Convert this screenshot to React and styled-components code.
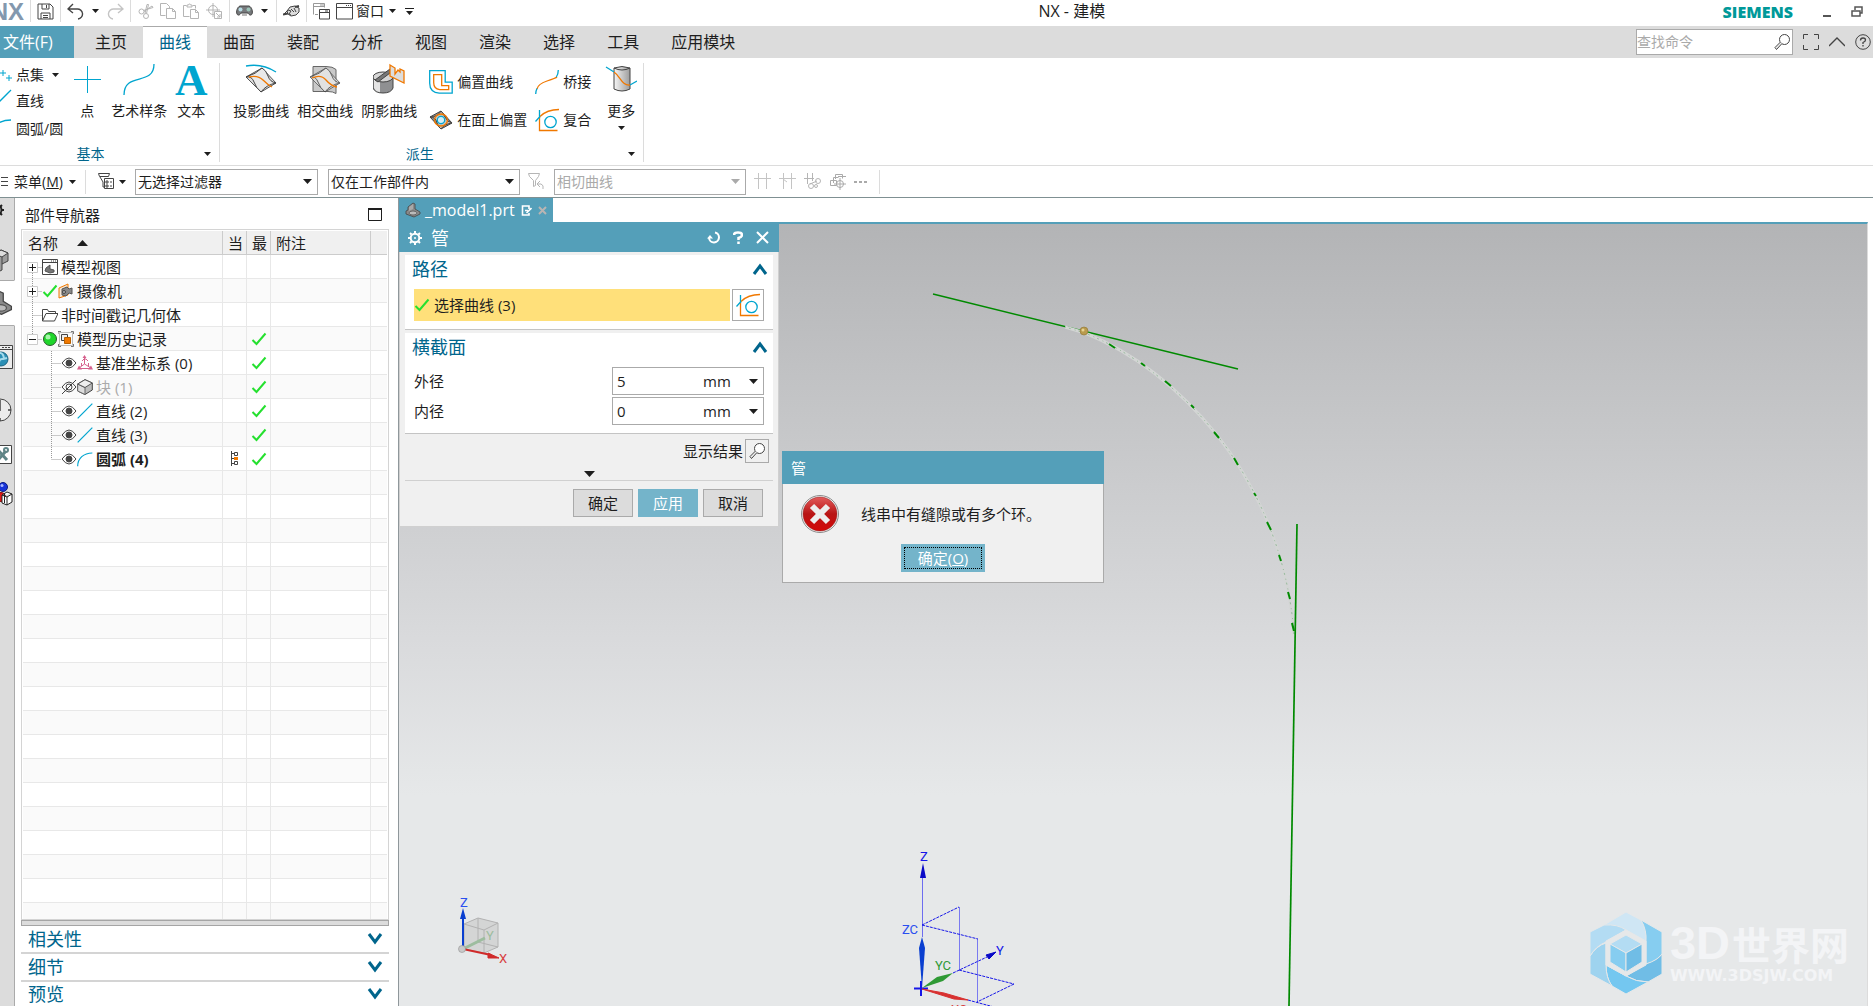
import React from 'react';
import styled, { createGlobalStyle, css } from 'styled-components';

const teal = '#549fb9';
const blue = '#00658c';
const cyan = '#00a5cf';
const orange = '#f07800';
const dark = '#444';

const GlobalStyle = createGlobalStyle`
  * {
    box-sizing: border-box;
  }
  body {
    margin: 0;
    overflow: hidden;
    background: #fff;
    color: #1e1e1e;
    font-family: 'Open Sans', 'Noto Sans CJK SC', sans-serif;
    font-size: 14px;
    line-height: 18px;
  }
  button, input, select {
    font: inherit;
    color: inherit;
  }
  svg {
    display: block;
    flex: none;
  }
`;

/* ---------- icons ---------- */

const Icon = ({ w = 16, h = w, vb, color = dark, children }) => (
  <svg width={w} height={h} viewBox={vb || `0 0 ${w} ${h}`} fill="none" stroke={color} aria-hidden="true">
    {children}
  </svg>
);

const Caret = ({ w = 7, color = '#1e1e1e' }) => (
  <svg width={w} height={(w + 1) / 2} viewBox="0 0 8 4" preserveAspectRatio="none" fill={color} aria-hidden="true">
    <path d="M0 0h8L4 4z" />
  </svg>
);

const SortArrow = () => (
  <svg width="11" height="6" viewBox="0 0 11 6" fill="#1e1e1e" aria-hidden="true">
    <path d="M0 6h11L5.500 0z" />
  </svg>
);

const Chevron = ({ up }) => (
  <Icon w={16} h={12} color={blue}>
    <path d={up ? 'M2 11L8 3L14 11' : 'M2 1L8 9L14 1'} strokeWidth="3" />
  </Icon>
);

const Check = () => (
  <Icon w={16} color="#25e02f">
    <path d="M1.500 9L5.500 13L14.500 2.500" strokeWidth="2" />
  </Icon>
);

const SaveIcon = () => (
  <Icon w={17}>
    <path d="M1 1h12l3 3v12H1zM5 1v5h7V1M9.500 2v3M4 16v-6h9v6M6 12.500h5M6 14.500h5" />
  </Icon>
);
const UndoIcon = ({ redo }) => (
  <Icon w={17} color={redo ? '#c4c4c4' : dark}>
    <g transform={redo ? 'translate(17 0) scale(-1 1)' : undefined} strokeWidth="1.400">
      <path d="M6 1L1 6l5 4M1 6h9a5 5 0 0 1 1 10" />
    </g>
  </Icon>
);
const CutIcon = () => (
  <Icon w={16} color="#b5b5b5">
    <circle cx="3.500" cy="8.500" r="2.500" />
    <circle cx="8" cy="13" r="2.500" />
    <path d="M5.500 7.500L15 4.500l-1-1.500L6 8.500M7 10.500L9 1.500h1.500L8.500 10.500" />
  </Icon>
);
const CopyIcon = () => (
  <Icon w={17} color="#b5b5b5">
    <path d="M5.500 12.500h-5v-12h6l3 3v2M6.500 5.500h6l3 3v7h-9zM12.500 5.500v3h3" />
  </Icon>
);
const PasteIcon = () => (
  <Icon w={17} color="#b5b5b5">
    <path d="M6.500 13.500h-6v-11h3M9.500 2.500h3v3M4 4V2h1.500a1 1 0 0 1 2 0H9v2zM7.500 6.500h5l3 3v6h-8zM12.500 6.500v3h3" />
  </Icon>
);
const TargetIcon = () => (
  <Icon w={17} color="#b5b5b5">
    <path d="M7 0v14M0 7h14" />
    <circle cx="7" cy="7" r="4.500" />
    <path d="M8.500 8.500h7v7h-7z" fill="#fff" />
    <path d="M10 10l4 4M14 11v3h-3" />
  </Icon>
);
const GamepadIcon = () => (
  <Icon w={17} h={12}>
    <path d="M4 1h9c3 1 4 6 3 8s-3 1-4-1H5c-1 2-3 3-4 1S1 2 4 1z" fill="#77797c" />
    <circle cx="4.500" cy="4.500" r="2" fill="#b7dce6" stroke="none" />
    <circle cx="12.500" cy="4.500" r="2" fill="#9cc4b8" stroke="none" />
    <path d="M6 9h5v2H6z" fill="#bbb" stroke="none" />
  </Icon>
);
const HandIcon = () => (
  <Icon w={17} h={13}>
    <path d="M4 6l3-4 5-1 4 2v4l-3 3-5 1-3-2z" fill="#ddd" />
    <path d="M1 9l4-4 3 1-2 3 2 1M8 4l3 3M11 3l2 4" />
    <path d="M0 9.500l5-1M12 2l4-1" strokeWidth="2" />
  </Icon>
);
const WindowsIcon = () => (
  <Icon w={17}>
    <path d="M.5 11.500v-11h11v4M.5 3.500h11M7 2h4M2 11.500h3" stroke="#999" />
    <path d="M6.500 6.500h10v9.500h-10zM6.500 9.500h10M12 8h3" />
  </Icon>
);
const WindowIcon = () => (
  <Icon w={17}>
    <path d="M.5.5h16v15.500H.5zM.5 4.500h16" />
    <path d="M10 2.500h6" strokeDasharray="1 1" />
  </Icon>
);

const PointSetIcon = () => (
  <Icon w={24} color={cyan}>
    <path d="M15 7v6M12 10h6M21 12v6M18 15h6M9 2v5M6 5h5" />
  </Icon>
);
const LineIcon = ({ w = 24 }) => (
  <Icon w={w} vb="0 0 24 24" color={cyan}>
    <path d="M1 23L23 1" strokeWidth={w > 20 ? 1.3 : 1.8} />
  </Icon>
);
const ArcIcon = ({ w = 24 }) => (
  <Icon w={w} vb="0 0 24 24" color={cyan}>
    <path d="M1 23C1 11 10 3 23 3" strokeWidth={w > 20 ? 1.4 : 1.8} />
  </Icon>
);
const PointIcon = () => (
  <Icon w={32} color={cyan}>
    <path d="M16.500 3v27M3 16.500h27" />
  </Icon>
);
const SplineIcon = () => (
  <Icon w={32} color={cyan}>
    <path d="M1 32C1 8 31 24 31 1" strokeWidth="1.300" />
  </Icon>
);

const Sheet = () => (
  <>
    <path d="M1 14L17 5l14 15-15 9z" fill="#dedede" stroke="#555" />
    <path d="M1 14q6-1 8 5t7 10q5-7 15-9-6-1-8-7t-6-8Q11 11 1 14z" fill="#e9e9e9" stroke="#444" />
  </>
);
const ProjectIcon = () => (
  <Icon w={32}>
    <Sheet />
    <path d="M1 3q16-3 30 6" stroke={cyan} strokeWidth="1.300" />
    <path d="M4 14q9-2 14 3t9 7" stroke={orange} strokeWidth="1.300" />
  </Icon>
);
const IntersectIcon = () => (
  <Icon w={32}>
    <path d="M4 3.500h13q7 0 10 3v24q-3-2-8-2H4z" fill="#c9c9c9" stroke="#666" />
    <g opacity=".8"><Sheet /></g>
    <path d="M3 15q9-4 14 2t11 7" stroke={orange} strokeWidth="1.300" />
  </Icon>
);
const ShadowIcon = () => (
  <Icon w={32}>
    <path d="M0 14v11q2 5 10 5t10-5V14z" fill="#8f9092" />
    <path d="M1 15v10q2 4 6 4V16z" fill="#e4e4e4" stroke="none" />
    <ellipse cx="10" cy="14" rx="10" ry="5" fill="#d6d6d6" />
    <path d="M2 17L17 6v4L5 19z" fill="#777" />
    <path d="M17 2l5 3v6l3-4 2 2v-3l4 2v12l-14-7z" fill="#ddd" stroke={orange} strokeWidth="1.300" />
  </Icon>
);
const OffsetIcon = () => (
  <Icon w={24}>
    <path d="M.7.7h15.500v11.500h7v11h-13q-9.500-1-9.500-10z" stroke={cyan} strokeWidth="1.300" />
    <path d="M4.700 4.700h8v11h7v4h-9q-6-1-6-7z" stroke={orange} strokeWidth="1.300" />
  </Icon>
);
const FaceOffsetIcon = () => (
  <Icon w={24}>
    <path d="M1 9L12 3l11 12-11 6z" fill="#8f8f8f" />
    <path d="M1 9q6 0 7 6 2 5 4 6 3-5 11-6-5-1-7-6-2-4-4-6-3 6-11 6z" fill="#c9c3bd" stroke={dark} />
    <ellipse cx="12" cy="12" rx="6.500" ry="6" stroke={orange} strokeWidth="1.300" />
    <circle cx="12" cy="12" r="3.700" fill="#d5eef5" stroke={cyan} strokeWidth="1.300" />
  </Icon>
);
const BridgeIcon = () => (
  <Icon w={24} color={orange}>
    <path d="M2 19q1-5 10-8t10-4" strokeWidth="1.300" />
    <path d="M.7 24q0-3 1.300-5.500M23.300 0q0 4-2 7" stroke={cyan} strokeWidth="1.300" />
  </Icon>
);
const CompositeIcon = () => (
  <Icon w={24} color={orange}>
    <path d="M4.500 9v13.500h18M5 8.500Q12 1.500 24 1.500" strokeWidth="1.300" />
    <path d="M4.500 2v8M.5 13.500L5 8.500" stroke={cyan} strokeWidth="1.300" />
    <circle cx="15.500" cy="14" r="5.700" stroke={cyan} strokeWidth="1.300" />
  </Icon>
);
const MoreIcon = () => (
  <Icon w={32}>
    <defs>
      <linearGradient id="cyl">
        <stop offset="0" stopColor="#f6f6f6" />
        <stop offset="1" stopColor="#9c9c9c" />
      </linearGradient>
    </defs>
    <path d="M9 5q8-3 16 0v21q-8 4-16 0z" fill="url(#cyl)" />
    <path d="M9 5q8 4 16 0" />
    <path d="M1 4l8 5M25 22l7-4" stroke={cyan} strokeWidth="1.300" />
    <path d="M9 9c6 4 8 14 16 13" stroke={orange} strokeWidth="1.300" />
  </Icon>
);

const FunnelIcon = () => (
  <Icon w={17}>
    <path d="M.5.500h11M.5.500l1 3h9l1-3M2 4l3 5v5h2" />
    <path d="M6.500 5.500h9v10h-9z" fill="#fff" />
    <path d="M8 8h2v2H8zM8 12h2v2H8zM12 9h2M12 13h2" />
  </Icon>
);
const FunnelBackIcon = () => (
  <Icon w={17} color="#b5b5b5">
    <path d="M.5.500h11l-1 3-3 4v5l-2 1V7.500l-4-4z" />
    <path d="M12 8l-3 3 3 3M9 11h4q3 1 2 5" />
  </Icon>
);
const FenceIcon = ({ mark }) => (
  <Icon w={17} color="#c4c4c4">
    <path d="M4.500 0v16M12.500 0v16M0 5.500h17" />
    {mark && <path d="M4 6l4 3" />}
  </Icon>
);
const ChainIcon = () => (
  <Icon w={17} color="#b5b5b5">
    <path d="M3.500 0v11M8.500 0v8M0 5.500h10M6 11l7-3" />
    <circle cx="14" cy="8" r="2.500" />
    <circle cx="7" cy="13" r="2.500" />
    <circle cx="12" cy="13" r="1.500" />
  </Icon>
);
const CrossIcon = () => (
  <Icon w={17} color="#aaa">
    <path d="M1.500 7.500h6v5h-6zM4.500 10V4.500h5M6.500 6V1.500h7v4M9 3.500h8" />
    <circle cx="11" cy="11" r="3.500" />
    <path d="M11 5v12M5 11h12" />
  </Icon>
);

const SearchIcon = ({ w = 16 }) => (
  <Icon w={w} vb="0 0 16 16">
    <circle cx="10.500" cy="5.500" r="5" fill="#fff" />
    <path d="M6.500 8L1 13.500l1.500 2L8 9.500" fill="#eee" />
  </Icon>
);

const PartIcon = ({ w = 16 }) => (
  <Icon w={w} vb="0 0 16 16">
    <path d="M3 5l5-4 2 1v5l5 3v2l-6 3-8-3v-3l2-1z" fill="#8a8a8a" stroke="#444" strokeWidth=".8" />
    <ellipse cx="8" cy="11" rx="4" ry="2" fill="#bbb" stroke="#555" strokeWidth=".8" />
    <path d="M4 5l4-3v5l-4 2z" fill="#a9a9a9" stroke="none" />
  </Icon>
);

const ModelViewIcon = () => (
  <Icon>
    <path d="M.5.500h15v15H.5z" fill="#fff" />
    <path d="M.5 3.500h15" />
    <path d="M9 2h6" strokeDasharray="1 1" />
    <path d="M4 9l4-3v4l4 1v2l-4 1-5-2z" fill="#777" stroke="#555" />
  </Icon>
);
const CameraIcon = () => (
  <Icon>
    <path d="M1 5l9-4v11L1 15z" stroke={orange} fill="#f3e5d6" />
    <path d="M4 6l5-2 2 2 3-1v6l-3-1-3 3-4-1z" fill="#888" stroke="#555" />
    <circle cx="6" cy="9" r="1.500" fill="#bbb" stroke="#444" />
  </Icon>
);
const FolderIcon = () => (
  <Icon>
    <path d="M.5 14V2.500h5l1 2h7V7M.5 14L4 6.500h12L12.500 14z" />
  </Icon>
);
const GreenBall = () => (
  <Icon>
    <circle cx="8" cy="8" r="6.500" fill="#1fd52b" stroke="#2b5a2d" />
    <circle cx="6" cy="6" r="2.500" fill="#a6f5a9" stroke="none" />
  </Icon>
);
const HistoryIcon = () => (
  <Icon color="#777">
    <path d="M1.500 1.500h13v13h-13z" stroke="#bbb" />
    <path d="M0 3V.5h3M13 .5h2.500V3M.5 13v2.500H3M13 15.500h2.500V13" />
    <path d="M3.500 3.500h6v6h-6z" stroke="#444" fill="#eee" />
    <path d="M6.500 6.500h6v6h-6z" fill={orange} stroke="#b86000" />
  </Icon>
);
const EyeIcon = ({ hidden }) => (
  <Icon>
    <path d="M1 8q7-10 14 0-7 10-14 0z" />
    <circle cx="8" cy="8" r="3" fill={hidden ? 'none' : dark} />
    {hidden && <path d="M1 15L15 1M6 10l4-4" />}
  </Icon>
);
const CsysIcon = () => (
  <Icon color="#d6618d">
    <path d="M7.500 1v8M7.500 9L2 13M7.500 9L14 13M2 13.500h12M5 6l2-2h2l2 2M4.500 8v3M11.500 8v3" />
    <path d="M7.500 0l2 3h-4zM0 14.500l2-4 3 4zM16 14.500l-2-4-3 4z" fill="#d6618d" stroke="none" />
  </Icon>
);
const BlockIcon = () => (
  <Icon>
    <path d="M.7 5L8 .700 15.300 4v7L8 15.500.7 12z" fill="#bdbdbd" />
    <path d="M.7 5L8 8.500V15.500L.7 12z" fill="#ddd" stroke="#666" />
    <path d="M.7 5L8 .700 15.300 4 8 8.500z" fill="#eee" stroke="#555" />
  </Icon>
);
const FlagIcon = () => (
  <Icon w={9} h={15}>
    <path d="M1.500 0v15M1.500 2.500h3M1.500 7.500h3M1.500 12.500h3M4.500 1.500h3v3h-3zM4.500 10.500h3v3h-3z" />
    <path d="M4 6h4v3H4z" fill={orange} stroke="none" />
  </Icon>
);

/* tree guides: expander box plus the dotted connectors round it */
const Guide = ({ kind, first, last }) => {
  const child = kind === 'child';
  const x = child ? 28.5 : 9.5;
  return (
    <svg width={child ? 38 : 19} height="23" fill="none" stroke="#999" aria-hidden="true">
      {!first && <path d={`M${x} 0V12`} strokeDasharray="1 1" />}
      {!last && <path d={`M${x} 12V23`} strokeDasharray="1 1" />}
      <path d={`M${x} 12.500h9`} strokeDasharray="1 1" />
      {(kind === 'plus' || kind === 'minus') && (
        <>
          <path d="M4.500 7.500h10v10h-10z" fill="#fff" stroke="#ccc" />
          <path d={kind === 'plus' ? 'M6 12.500h7M9.500 9v7' : 'M6 12.500h7'} stroke="#1e1e1e" />
        </>
      )}
    </svg>
  );
};

/* ---------- title bar ---------- */

const Page = styled.div`
  display: flex;
  flex-direction: column;
  height: 100vh;
`;

const PlainButton = styled.button`
  display: flex;
  align-items: center;
  justify-content: center;
  padding: 0;
  border: 0;
  background: none;
`;

const TitleBar = styled.header`
  display: flex;
  height: 26px;
  flex: none;
`;

const Brand = styled.div`
  display: flex;
  justify-content: flex-end;
  width: 30px;
  padding-right: 6px;
  overflow: hidden;
  color: #8398ae;
  font: bold 24px/24px 'Liberation Sans', sans-serif;
`;

const QuickGroup = styled.div`
  display: flex;
  align-items: center;
  height: 22px;
  padding: 0 3px;
  border-left: 1px solid #dcdcdc;
`;

const QuickButton = styled(PlainButton)`
  width: ${({ $narrow }) => ($narrow ? '17px' : '23px')};
  height: 22px;
`;

const Title = styled.h1`
  flex: 1;
  margin: 0;
  text-align: center;
  font-size: 16px;
  font-weight: normal;
  line-height: 22px;
`;

const Siemens = styled.span`
  color: #009999;
  font-size: 16px;
  font-weight: 800;
  line-height: 24px;
`;

const WindowControls = styled.div`
  display: flex;
  gap: 20px;
  height: 22px;
  padding: 0 10px 0 30px;
`;

/* ---------- ribbon ---------- */

const TabBar = styled.nav`
  display: flex;
  align-items: stretch;
  height: 32px;
  flex: none;
  background: #dcdcdc;
`;

const Tab = styled.a`
  padding: 0 16px;
  font-size: 16px;
  line-height: 32px;
  text-decoration: none;
  color: #1e1e1e;
  ${({ $file }) =>
    $file &&
    css`
      width: 74px;
      margin-right: 5px;
      padding: 0 0 0 3px;
      background: ${teal};
      color: #fff;
    `}
  ${({ $active }) =>
    $active &&
    css`
      background: #fff;
      color: ${blue};
      box-shadow: inset 0 1px #aaa;
    `}
`;

const TabTools = styled.div`
  display: flex;
  align-items: center;
  gap: 10px;
  margin-left: auto;
  padding-right: 2px;
`;

const SearchBox = styled.label`
  display: flex;
  align-items: center;
  width: 157px;
  height: 26px;
  padding-right: 2px;
  border: 1px solid #aaa;
  background: #fff;

  input {
    flex: 1;
    min-width: 0;
    padding: 0;
    border: 0;
    outline: 0;
    background: none;
  }
  input::placeholder {
    color: #aaa;
  }
`;

const Ribbon = styled.div`
  display: flex;
  height: 108px;
  flex: none;
  padding: 5px 0 3px;
  border-bottom: 1px solid #dcdcdc;
  overflow: hidden;
`;

const RibbonGroup = styled.section`
  display: flex;
  flex-direction: column;
  justify-content: space-between;
  border-right: 1px solid #dcdcdc;
  /* the first group is scrolled partly out of the window */
  margin-left: ${({ $cut }) => ($cut ? '-14px' : '0')};
`;

const Tools = styled.div`
  display: flex;
  gap: ${({ $gap }) => $gap || 0}px;
  padding: 0 ${({ $end }) => $end}px 0 ${({ $start }) => $start}px;
`;

const GroupFooter = styled.footer`
  display: flex;
  align-items: center;
  height: 16px;
  color: ${blue};

  span {
    flex: 1;
    text-align: center;
  }
  button {
    width: 24px;
  }
`;

const BigTool = styled(PlainButton)`
  flex-direction: column;
  justify-content: flex-start;
  width: ${({ $w }) => $w}px;
  white-space: nowrap;

  span {
    margin: 7px 0 6px;
  }
`;

const Letter = styled.b`
  height: 32px;
  color: ${cyan};
  font: bold 45px/34px 'Liberation Serif', serif;
`;

const ToolList = styled.div`
  display: flex;
  flex-direction: column;
`;

const SmallTool = styled(PlainButton)`
  justify-content: flex-start;
  gap: 4px;
  height: ${({ $h }) => $h}px;
  white-space: nowrap;

  svg:last-child:not(:first-child) {
    margin-left: 4px;
  }
`;

/* ---------- selection bar ---------- */

const SelectionBar = styled.div`
  display: flex;
  align-items: center;
  height: 32px;
  flex: none;
  border-bottom: 1px solid #7f9092;
`;

const MenuButton = styled(PlainButton)`
  gap: 6px;
  width: 85px;
  padding-right: 8px;
`;

const Rule = styled.div`
  width: 1px;
  height: 24px;
  background: #dcdcdc;
`;

const FilterButton = styled(PlainButton)`
  gap: 4px;
  width: 49px;
  padding-left: 2px;
`;

const Dropdown = styled.div`
  display: grid;
  align-items: center;
  width: ${({ $w }) => $w}px;
  height: 26px;
  border: 1px solid #aaa;
  color: ${({ $off }) => ($off ? '#aaa' : '#1e1e1e')};
  margin-right: ${({ $gap }) => $gap || 0}px;

  select {
    grid-area: 1 / 1;
    height: 24px;
    padding: 0 2px;
    border: 0;
    border-radius: 0;
    outline: 0;
    appearance: none;
    background: none;
    opacity: 1;
  }
  svg {
    grid-area: 1 / 1;
    justify-self: end;
    margin-right: 5px;
    pointer-events: none;
  }
`;

const SnapTools = styled.div`
  display: flex;
  align-items: center;
  gap: 8px;
  padding: 0 12px 0 8px;
`;

const SnapButton = styled(PlainButton)`
  height: 24px;
  margin: ${({ $m }) => $m || '0'};
`;

const Dots = styled.span`
  width: 13px;
  height: 2px;
  background: repeating-linear-gradient(90deg, #aaa 0 3px, transparent 3px 5px);
`;

/* ---------- resource strip + navigator ---------- */

const Main = styled.main`
  display: flex;
  flex: 1;
  min-height: 0;
`;

const Strip = styled.nav`
  display: flex;
  flex-direction: column;
  width: 15px;
  background: #dcdcdc;
`;

const StripItem = styled(PlainButton)`
  justify-content: flex-end;
  width: 15px;
  height: ${({ $h }) => $h}px;
  padding-top: ${({ $top }) => $top || 0}px;
  padding-right: ${({ $right }) => $right || 1}px;
  overflow: hidden;
  border-right: 1px solid #aaa;
  ${({ $active }) =>
    $active &&
    css`
      background: #fff;
      border-right-color: #fff;
      border-top: 1px solid #aaa;
      border-bottom: 1px solid #aaa;
    `}
`;

const StripFill = styled.div`
  flex: 1;
  border-right: 1px solid #aaa;
`;

const Navigator = styled.aside`
  display: flex;
  flex-direction: column;
  width: 384px;
  padding: 0 9px 0 6px;
  border-right: 1px solid #8f979b;
`;

const NavHead = styled.div`
  display: flex;
  align-items: center;
  justify-content: space-between;
  height: 31px;
  padding: 2px 7px 0 4px;
  font-size: 15px;
`;

const TreeBox = styled.div`
  flex: 1;
  min-height: 0;
  padding: 1px;
  overflow: hidden;
  border: 1px solid #d4d4d4;
`;

const Tree = styled.table`
  width: 100%;
  table-layout: fixed;
  border-collapse: separate;
  border-spacing: 0;
  font-size: 15px;

  th, td {
    height: 24px;
    padding: 0;
    border-right: 1px solid #e8e8e8;
    border-bottom: 1px solid #e8e8e8;
    line-height: 22px;
    white-space: nowrap;
  }
  th {
    padding-left: 5px;
    border-color: #ccc;
    background: #f0f0f0;
    font-weight: normal;
    text-align: left;
  }
  th:last-child, td:last-child {
    border-right: 0;
  }
  tbody tr:nth-child(even) {
    background: #fafafa;
  }
`;

const Col = styled.col`
  width: ${({ $w }) => ($w ? `${$w}px` : 'auto')};
`;

const Node = styled.div`
  display: flex;
  align-items: center;
  height: 23px;
  color: ${({ $dim }) => ($dim ? '#aaa' : 'inherit')};
  font-weight: ${({ $bold }) => ($bold ? 'bold' : 'normal')};

  span {
    padding-left: 3px;
  }
`;

const SortHead = styled.span`
  display: flex;
  align-items: center;
  gap: 19px;
`;

const Mark = styled.div`
  display: flex;
  justify-content: center;
`;

const Splitter = styled.div`
  height: 6px;
  flex: none;
  border: 1px solid #a5a5a5;
  background: #dcdcdc;
`;

const Fold = styled(PlainButton)`
  justify-content: space-between;
  height: 28px;
  flex: none;
  padding: 0 6px 0 7px;
  border-bottom: 2px solid #d4d4d4;
  color: ${blue};
  font-size: 18px;
  line-height: 24px;

  &:last-child {
    height: 24px;
    border-bottom: 0;
  }
`;

/* ---------- graphics window ---------- */

const Workspace = styled.section`
  display: flex;
  flex: 1;
  flex-direction: column;
  min-width: 0;
  padding-right: 5px;
`;

const FileTab = styled.div`
  display: flex;
  align-items: center;
  align-self: flex-start;
  height: 24px;
  padding: 0 6px;
  background: ${teal};
  color: #fff;
  font-size: 16px;

  span {
    margin: 0 6px 0 4px;
  }
  svg + svg {
    margin-left: 6px;
  }
`;

const Viewport = styled.div`
  position: relative;
  flex: 1;
  overflow: hidden;
  border-top: 2px solid ${teal};
  border-right: 1px solid #dcdcdc;
  background: linear-gradient(#b3b4b6, #d9dadc 53%, #e6e8e9 73%);
`;

const Scene = styled.svg`
  position: absolute;
  top: 0;
  left: 0;
  font-family: Roboto, sans-serif;
  font-size: 13px;
`;

const Watermark = styled.div`
  position: absolute;
  right: 18px;
  bottom: 12px;
  display: flex;
  align-items: center;
  gap: 8px;
  color: #f3f4f6;
  font-weight: bold;
`;

const MarkName = styled.div`
  display: flex;
  align-items: center;
  gap: 2px;
  font: bold 39px/46px 'Noto Sans CJK SC', sans-serif;

  span {
    font: bold 47px/46px 'Liberation Sans', sans-serif;
  }
`;

const MarkUrl = styled.div`
  font: bold 16px/20px 'DejaVu Sans', sans-serif;
`;

const ToolDialog = styled.form`
  position: absolute;
  top: 0;
  left: 0;
  width: 380px;
  border: solid #d0d0d0;
  border-width: 0 1px 1px;
  background: #f0f0f0;
  font-size: 15px;
`;

const DialogHead = styled.header`
  display: flex;
  align-items: center;
  height: 28px;
  margin: 0 -1px;
  padding: 0 10px 1px 9px;
  background: ${teal};
  color: #fff;

  h2 {
    flex: 1;
    margin: 0 0 0 9px;
    font-size: 18px;
    font-weight: normal;
  }
  button + button {
    margin-left: 13px;
  }
`;

const Panel = styled.fieldset`
  margin: 3px 5px 0;
  padding: 0 9px 8px;
  border: 0;
  border-bottom: 1px solid #c4c4c4;
  background: #fff;
`;

const PanelHead = styled.div`
  display: flex;
  align-items: center;
  justify-content: space-between;
  height: 28px;
  margin: 0 -4px 6px -2px;
  color: ${blue};
  font-size: 18px;
`;

const PickRow = styled.div`
  display: flex;
  gap: 2px;
`;

const Picked = styled.div`
  display: flex;
  align-items: center;
  gap: 4px;
  flex: 1;
  height: 32px;
  background: #ffe07a;
`;

const SquareButton = styled(PlainButton)`
  width: ${({ $s }) => $s}px;
  height: ${({ $s }) => $s}px;
  border: 1px solid #aaa;
`;

const FieldRow = styled.div`
  display: flex;
  align-items: center;
  justify-content: space-between;

  & + & {
    margin-top: 2px;
  }
`;

const Field = styled.div`
  display: grid;
  grid-template-columns: 1fr 64px;
  align-items: center;
  width: 152px;
  height: 28px;
  border: 1px solid #aaa;

  input, select {
    grid-row: 1;
    width: 100%;
    min-width: 0;
    height: 26px;
    padding: 0 4px;
    border: 0;
    border-radius: 0;
    outline: 0;
    background: none;
    appearance: none;
  }
  select {
    grid-column: 2;
  }
  svg {
    grid-area: 1 / 2;
    justify-self: end;
    margin-right: 5px;
    pointer-events: none;
  }
`;

const ResultRow = styled.div`
  display: flex;
  align-items: center;
  justify-content: flex-end;
  gap: 2px;
  padding: 5px 9px 0;
`;

const MoreBar = styled(PlainButton)`
  width: 368px;
  height: 18px;
  margin: 0 5px;
  padding-top: 4px;
  border-bottom: 1px solid #d0d0d0;
`;

const Actions = styled.div`
  display: flex;
  justify-content: ${({ $center }) => ($center ? 'center' : 'flex-end')};
  gap: 5px;
  padding: ${({ $center }) => ($center ? '0 0 10px' : '8px 15px 9px')};
`;

const ActionButton = styled.button`
  width: ${({ $wide }) => ($wide ? '84px' : '60px')};
  height: 28px;
  padding: 0;
  border: 1px solid ${({ $primary }) => ($primary ? '#74b4ca' : '#aaa')};
  background: ${({ $primary }) => ($primary ? '#74b4ca' : '#dcdcdc')};
  color: ${({ $primary }) => ($primary ? '#fff' : '#1e1e1e')};
  font-size: 15px;
  ${({ $wide }) =>
    $wide &&
    css`
      outline: 1px dotted #000;
      outline-offset: -4px;
    `}
`;

const Alert = styled.div`
  position: absolute;
  top: 227px;
  left: 383px;
  width: 322px;
  border: solid #aaa;
  border-width: 0 1px 1px;
  background: #f0f0f0;
  font-size: 15px;
`;

const AlertHead = styled.h2`
  height: 33px;
  margin: 0 -1px;
  padding-left: 9px;
  background: ${teal};
  color: #fff;
  font-size: 15px;
  font-weight: normal;
  line-height: 34px;
`;

const AlertBody = styled.div`
  display: flex;
  align-items: center;
  gap: 21px;
  height: 60px;
  padding-left: 17px;
`;

/* ---------- data ---------- */

const tabs = ['主页', '曲线', '曲面', '装配', '分析', '视图', '渲染', '选择', '工具', '应用模块'];

const rows = [
  { name: '模型视图', kind: 'plus', first: true, icons: [<ModelViewIcon />] },
  { name: '摄像机', kind: 'plus', icons: [<Check />, <CameraIcon />] },
  { name: '非时间戳记几何体', kind: 'leaf', icons: [<FolderIcon />] },
  { name: '模型历史记录', kind: 'minus', last: true, icons: [<GreenBall />, <HistoryIcon />], ok: true },
  { name: '基准坐标系 (0)', kind: 'child', icons: [<EyeIcon />, <CsysIcon />], ok: true },
  { name: '块 (1)', kind: 'child', icons: [<EyeIcon hidden />, <BlockIcon />], ok: true, dim: true },
  { name: '直线 (2)', kind: 'child', icons: [<EyeIcon />, <LineIcon w={16} />], ok: true },
  { name: '直线 (3)', kind: 'child', icons: [<EyeIcon />, <LineIcon w={16} />], ok: true },
  { name: '圆弧 (4)', kind: 'child', last: true, icons: [<EyeIcon />, <ArcIcon w={16} />], ok: true, bold: true, current: true },
];
const blankRows = Array.from({ length: 30 });

const arc = 'M666 103L686 109C738 130 783 168 818 211C858 262 889 330 895 410';
const dashes = [
  'M710 120L716 124', 'M742 139L746 142', 'M766 157L772 162', 'M792 181L795 184',
  'M815 208L820 214', 'M835 234L839 241', 'M855 269L857 272', 'M868 298L872 306',
  'M880 331L882 337', 'M889 368L891 375', 'M893 399L895 407',
];

/* ---------- parts ---------- */

const QuickBar = () => (
  <TitleBar>
    <Brand>NX</Brand>
    <QuickGroup>
      <QuickButton aria-label="保存"><SaveIcon /></QuickButton>
    </QuickGroup>
    <QuickGroup>
      <QuickButton aria-label="撤消"><UndoIcon /></QuickButton>
      <QuickButton $narrow aria-label="撤消列表"><Caret /></QuickButton>
      <QuickButton aria-label="重做"><UndoIcon redo /></QuickButton>
    </QuickGroup>
    <QuickGroup>
      <QuickButton aria-label="剪切"><CutIcon /></QuickButton>
      <QuickButton aria-label="复制"><CopyIcon /></QuickButton>
      <QuickButton aria-label="粘贴"><PasteIcon /></QuickButton>
      <QuickButton aria-label="移动"><TargetIcon /></QuickButton>
    </QuickGroup>
    <QuickGroup>
      <QuickButton aria-label="重复命令"><GamepadIcon /></QuickButton>
      <QuickButton $narrow aria-label="命令列表"><Caret /></QuickButton>
    </QuickGroup>
    <QuickGroup>
      <QuickButton aria-label="触控"><HandIcon /></QuickButton>
    </QuickGroup>
    <QuickGroup>
      <QuickButton aria-label="切换窗口"><WindowsIcon /></QuickButton>
      <QuickButton aria-label="窗口"><WindowIcon /></QuickButton>
      <span>窗口</span>
      <QuickButton $narrow aria-label="窗口列表"><Caret /></QuickButton>
      <QuickButton $narrow aria-label="自定义">
        <Icon w={9} h={7}><path d="M0 .5h9" stroke="#1e1e1e" /><path d="M1 3h7L4.500 7z" fill="#1e1e1e" stroke="none" /></Icon>
      </QuickButton>
    </QuickGroup>
    <Title>NX - 建模</Title>
    <Siemens>SIEMENS</Siemens>
    <WindowControls>
      <PlainButton aria-label="最小化">
        <Icon w={8} h={11}><path d="M0 10h8" stroke="#555" strokeWidth="2" /></Icon>
      </PlainButton>
      <PlainButton aria-label="还原">
        <Icon w={12} h={11} color="#555"><path d="M4 4V1h7v6H9M1 5h8v5H1z" strokeWidth="1.500" /></Icon>
      </PlainButton>
    </WindowControls>
  </TitleBar>
);

const Tabs = () => (
  <TabBar>
    <Tab $file href="#file">文件(F)</Tab>
    {tabs.map((name) => (
      <Tab key={name} href={`#${name}`} $active={name === '曲线'}>{name}</Tab>
    ))}
    <TabTools>
      <SearchBox>
        <input type="text" placeholder="查找命令" aria-label="查找命令" />
        <SearchIcon />
      </SearchBox>
      <PlainButton aria-label="全屏">
        <Icon><path d="M.5 5V.5H5M11 .5h4.500V5M.5 11v4.500H5M11 15.500h4.500V11" /></Icon>
      </PlainButton>
      <PlainButton aria-label="折叠">
        <Icon><path d="M0 12L8 4l8 8" strokeWidth="1.300" /></Icon>
      </PlainButton>
      <PlainButton aria-label="帮助">
        <Icon>
          <circle cx="8" cy="8" r="7.300" />
          <path d="M5.500 6.500Q5.500 4 8 4t2.500 2Q10.500 7.500 8 8.500V10M8 11v1.500" strokeWidth="1.300" />
        </Icon>
      </PlainButton>
    </TabTools>
  </TabBar>
);

const CurveRibbon = () => (
  <Ribbon>
    <RibbonGroup $cut>
      <Tools $start={2} $end={4}>
        <ToolList>
          <SmallTool $h={24}><PointSetIcon />点集 <Caret /></SmallTool>
          <SmallTool $h={28}><LineIcon />直线</SmallTool>
          <SmallTool $h={28}><ArcIcon />圆弧/圆</SmallTool>
        </ToolList>
        <BigTool $w={48}><PointIcon /><span>点</span></BigTool>
        <BigTool $w={56}><SplineIcon /><span>艺术样条</span></BigTool>
        <BigTool $w={48}><Letter>A</Letter><span>文本</span></BigTool>
      </Tools>
      <GroupFooter>
        <span>基本</span>
        <PlainButton aria-label="基本选项"><Caret /></PlainButton>
      </GroupFooter>
    </RibbonGroup>
    <RibbonGroup>
      <Tools $gap={8} $start={9} $end={0}>
        <Tools $start={0} $end={0}>
          <BigTool $w={64}><ProjectIcon /><span>投影曲线</span></BigTool>
          <BigTool $w={64}><IntersectIcon /><span>相交曲线</span></BigTool>
          <BigTool $w={64}><ShadowIcon /><span>阴影曲线</span></BigTool>
        </Tools>
        <ToolList>
          <SmallTool $h={38}><OffsetIcon />偏置曲线</SmallTool>
          <SmallTool $h={38}><FaceOffsetIcon />在面上偏置</SmallTool>
        </ToolList>
        <ToolList>
          <SmallTool $h={38}><BridgeIcon />桥接</SmallTool>
          <SmallTool $h={38}><CompositeIcon />复合</SmallTool>
        </ToolList>
        <BigTool $w={44}><MoreIcon /><span>更多</span><Caret /></BigTool>
      </Tools>
      <GroupFooter>
        <span>派生</span>
        <PlainButton aria-label="派生选项"><Caret /></PlainButton>
      </GroupFooter>
    </RibbonGroup>
  </Ribbon>
);

const Selection = () => (
  <SelectionBar>
    <MenuButton>
      <Icon w={7} h={10}><path d="M0 .5h7M0 4.500h7M0 8.500h7" /></Icon>
      <span>菜单(<u>M</u>)</span>
      <Caret />
    </MenuButton>
    <Rule />
    <FilterButton aria-label="过滤器"><FunnelIcon /><Caret /></FilterButton>
    <Dropdown $w={183} $gap={10}>
      <select aria-label="类型过滤器"><option>无选择过滤器</option></select>
      <Caret w={9} />
    </Dropdown>
    <Dropdown $w={192}>
      <select aria-label="选择范围"><option>仅在工作部件内</option></select>
      <Caret w={9} />
    </Dropdown>
    <SnapButton $m="0 9px 0 8px" aria-label="重置过滤器"><FunnelBackIcon /></SnapButton>
    <Dropdown $w={192} $off>
      <select aria-label="曲线规则" disabled><option>相切曲线</option></select>
      <Caret w={9} color="#aaa" />
    </Dropdown>
    <SnapTools>
      <SnapButton aria-label="在相交处停止"><FenceIcon /></SnapButton>
      <SnapButton aria-label="跟随圆角"><FenceIcon mark /></SnapButton>
      <SnapButton aria-label="特征内成链"><ChainIcon /></SnapButton>
      <SnapButton aria-label="路径选择"><CrossIcon /></SnapButton>
      <SnapButton aria-label="更多"><Dots /></SnapButton>
    </SnapTools>
    <Rule />
  </SelectionBar>
);

const ResourceStrip = () => (
  <Strip>
    <StripItem $h={24} $right={9} aria-label="设置">
      <Icon w={16} color="#222">
        <circle cx="8" cy="8" r="4.500" strokeWidth="2" />
        <path d="M8 1v2M8 13v2M1 8h2M13 8h2M3 3l1.500 1.500M13 3l-1.500 1.500M3 13l1.500-1.500M13 13l-1.500-1.500" strokeWidth="2" />
      </Icon>
    </StripItem>
    <StripItem $h={58} $top={20} $right={5} aria-label="装配导航器">
      <Icon w={24}>
        <path d="M8 6l8-5 7 3v8l-6 3v6l-6 3-8-4z" fill="#9c9c9c" />
        <path d="M16 1l7 3-6 4-7-3zM17 8v7" fill="#ddd" />
      </Icon>
    </StripItem>
    <StripItem $h={46} $active aria-label="部件导航器"><PartIcon w={26} /></StripItem>
    <StripItem $h={62} aria-label="浏览器">
      <Icon w={24}>
        <path d="M.5.500h23v23H.5z" fill="#ececec" />
        <path d="M.5 4.500h23" />
        <path d="M13 2.500h9" strokeDasharray="2 1" />
        <circle cx="12" cy="14" r="7" fill="#2b8fb5" stroke="#1c6684" />
        <path d="M8 10q4-4 6 0t-1 4-3 4M14 14l4-1" stroke="#a5dbec" strokeWidth="2" />
      </Icon>
    </StripItem>
    <StripItem $h={44} $right={2} aria-label="历史记录">
      <Icon w={24}>
        <circle cx="12" cy="12" r="11" fill="#ececec" />
        <path d="M12 4v9M12 2v2M20 12h3M12 20v3" strokeWidth="1.500" />
      </Icon>
    </StripItem>
    <StripItem $h={44} $right={2} aria-label="加工向导">
      <Icon w={22} h={19}>
        <path d="M.5.500h21v18H.5z" fill="#fff" />
        <path d="M7 16l9-10M8 5l9 10" stroke="#5f8587" strokeWidth="3" />
        <circle cx="16" cy="5" r="2" stroke="#5f8587" strokeWidth="2" />
      </Icon>
    </StripItem>
    <StripItem $h={36} aria-label="角色">
      <Icon w={24}>
        <circle cx="14" cy="5" r="4.500" fill="#1734d8" stroke="#0b1a80" />
        <circle cx="13" cy="3.500" r="1.500" fill="#a9b7ff" stroke="none" />
        <circle cx="12" cy="15" r="4.500" fill="#e01818" stroke="#8a0d0d" />
        <path d="M13 13l5-3 5 2v8l-5 3-5-2zM13 13l5 2 5-3M18 15v8M15.500 12v9" fill="#fff" stroke="#222" />
      </Icon>
    </StripItem>
    <StripFill />
  </Strip>
);

const PartNavigator = () => (
  <Navigator>
    <NavHead>
      部件导航器
      <PlainButton aria-label="最大化">
        <Icon w={14} h={13} color="#1e1e1e">
          <path d="M.5 0v12.500h13V0" />
          <path d="M0 1h14" strokeWidth="2" />
        </Icon>
      </PlainButton>
    </NavHead>
    <TreeBox>
      <Tree>
        <colgroup>
          <Col $w={200} /><Col $w={24} /><Col $w={24} /><Col $w={100} /><Col />
        </colgroup>
        <thead>
          <tr>
            <th><SortHead>名称 <SortArrow /></SortHead></th>
            <th>当</th>
            <th>最</th>
            <th>附注</th>
            <th aria-label="其他" />
          </tr>
        </thead>
        <tbody>
          {rows.map((row) => (
            <tr key={row.name}>
              <td>
                <Node $dim={row.dim} $bold={row.bold}>
                  <Guide kind={row.kind} first={row.first} last={row.last} />
                  {row.icons.map((icon, i) => <React.Fragment key={i}>{icon}</React.Fragment>)}
                  <span>{row.name}</span>
                </Node>
              </td>
              <td><Mark>{row.current && <FlagIcon />}</Mark></td>
              <td><Mark>{row.ok && <Check />}</Mark></td>
              <td />
              <td />
            </tr>
          ))}
          {blankRows.map((_, i) => (
            <tr key={i}><td /><td /><td /><td /><td /></tr>
          ))}
        </tbody>
      </Tree>
    </TreeBox>
    <Splitter />
    <Fold>相关性<Chevron /></Fold>
    <Fold>细节<Chevron /></Fold>
    <Fold>预览<Chevron /></Fold>
  </Navigator>
);

const Model = () => (
  <Scene width="1468" height="782" viewBox="0 0 1468 782" fill="none">
    <path d="M534 70L839 145" stroke="#008a00" strokeWidth="1.500" />
    <path d={arc} stroke="#d3d5d4" strokeWidth="3" />
    <path d={arc} stroke="#7fae86" strokeWidth="1" strokeDasharray="1 3 2 4" opacity=".7" />
    {dashes.map((d) => <path key={d} d={d} stroke="#008a00" strokeWidth="2" />)}
    <path d="M898 300L890 782" stroke="#008a00" strokeWidth="1.700" />
    <circle cx="685" cy="107" r="4" fill="#b99b4e" stroke="#8d7433" strokeWidth=".6" />
    <circle cx="684" cy="106" r="1.500" fill="#e6d391" />

    {/* view triad */}
    <path d="M65 700L79 694L99 699V723L85 729L65 725z" fill="#cfcfcf" opacity=".8" />
    <path d="M65 700L79 694L99 699L85 706zM85 706V729L99 723V699M65 700V725L85 729M79 694V718L99 723M79 718L65 725" stroke="#b2b2b2" />
    <path d="M64 725L86 714" stroke="#9dbd9f" strokeWidth="3" />
    <text x="87" y="716" fill="#9dbd9f">Y</text>
    <path d="M64 725V692" stroke="#0a3fd0" strokeWidth="2" />
    <path d="M64 684l3 11h-6z" fill="#0a3fd0" />
    <path d="M64 725L92 731" stroke="#d02a2a" strokeWidth="2" />
    <path d="M100 734l-11-5v5z" fill="#d02a2a" stroke="#d02a2a" />
    <circle cx="63" cy="725" r="3.500" fill="#c9c9c9" stroke="#909090" strokeWidth=".6" />
    <text x="61" y="683" fill="#2a4ff0">Z</text>
    <text x="100" y="739" fill="#d84040">X</text>

    {/* datum CSYS */}
    <g stroke="#1616e8">
      <path d="M523.500 654V713" stroke="#6d6df0" />
      <path d="M560.500 683V746M578.500 715V778" stroke="#7a7af0" />
      <path d="M523 701L560 683M523 701L579 715M560 746L615 760M615 760L578 778M554 749L588 733M569 776L595 783" strokeDasharray="3 1" />
      <path d="M515 764.500h14M522 757v15" strokeWidth="2" />
    </g>
    <path d="M524 639l3 15h-6z" fill="#0a0ac8" />
    <path d="M597 728l-7 7-3-4z" fill="#0a0ac8" stroke="#0a0ac8" />
    <path d="M523 713l3 11-3 40-3-40z" fill="#0a3fd0" />
    <path d="M523 764l15-11 16-4-10 8z" fill="#2f9a35" />
    <path d="M523 765l22 4 24 7-14-1z" fill="#d83030" stroke="#d83030" />
    <text x="521" y="637" fill="#1616e8">Z</text>
    <text x="503" y="710" fill="#2a4ff0">ZC</text>
    <text x="536" y="746" fill="#2f9a35">YC</text>
    <text x="597" y="731" fill="#1616e8">Y</text>
    <text x="552" y="790" fill="#d84040">XC</text>
  </Scene>
);

const SiteMark = () => (
  <Watermark>
    <Icon w={72} h={82} color="#e6e8e9">
      <path d="M36 0L51 8Q58 18 56 30L36 18L14 13z" fill="#cfe6f4" />
      <path d="M51 8L72 20V42Q66 50 56 52V30Q57 18 51 8z" fill="#86cdf0" />
      <path d="M72 42V62L58 70Q46 70 36 64L56 52Q68 48 72 42z" fill="#70bde6" />
      <path d="M58 70L36 82L22 74Q16 66 16 53L36 64Q46 70 58 70z" fill="#74c7f0" />
      <path d="M22 74L0 62V44Q6 34 16 31V53Q16 66 22 74z" fill="#9ed3ef" />
      <path d="M0 44V20L14 13Q28 12 36 18L16 30Q6 34 0 44z" fill="#b3dcf3" />
      <path d="M36 18L56 29V53L36 64L16 53V29z" fill="#e6e8e9" />
      <path d="M36 23L52 32L36 41L20 32z" fill="#b3dcf3" />
      <path d="M20 32L36 41V60L20 50z" fill="#86cdf0" />
      <path d="M52 32L36 41V60L52 50z" fill="#70bde6" />
    </Icon>
    <div>
      <MarkName><span>3D</span>世界网</MarkName>
      <MarkUrl>WWW.3DSJW.COM</MarkUrl>
    </div>
  </Watermark>
);

const SizeField = ({ id, label, value }) => (
  <FieldRow>
    <label htmlFor={id}>{label}</label>
    <Field>
      <input id={id} type="text" defaultValue={value} />
      <select aria-label={`${label}单位`}><option>mm</option></select>
      <Caret w={9} />
    </Field>
  </FieldRow>
);

const TubeDialog = () => (
  <ToolDialog onSubmit={(e) => e.preventDefault()}>
    <DialogHead>
      <Icon w={14} color="#fff">
        <circle cx="7" cy="7" r="4.300" strokeWidth="2" />
        <path d="M7 0v2M7 12v2M0 7h2M12 7h2M2 2l1.500 1.500M12 2l-1.500 1.500M2 12l1.500-1.500M12 12l-1.500-1.500" strokeWidth="2" />
        <circle cx="7" cy="7" r="1" fill="#fff" stroke="none" />
      </Icon>
      <h2>管</h2>
      <PlainButton type="button" aria-label="重置">
        <Icon w={13} color="#fff">
          <path d="M8 1.500a5 5 0 1 1-6 5.500" strokeWidth="2" />
          <path d="M0 7.500L3 4l3 3.500z" fill="#fff" stroke="none" />
        </Icon>
      </PlainButton>
      <PlainButton type="button" aria-label="帮助">
        <Icon w={10} h={13} color="#fff"><path d="M1 4Q1 1.500 5 1.500T9 4Q9 6 5.500 7v2M5.500 10.500V13" strokeWidth="2.500" /></Icon>
      </PlainButton>
      <PlainButton type="button" aria-label="关闭">
        <Icon w={13} color="#fff"><path d="M1 1l11 11M12 1L1 12" strokeWidth="2" /></Icon>
      </PlainButton>
    </DialogHead>
    <Panel>
      <PanelHead>路径<Chevron up /></PanelHead>
      <PickRow>
        <Picked><Check />选择曲线 (3)</Picked>
        <SquareButton type="button" $s={32} aria-label="曲线"><CompositeIcon /></SquareButton>
      </PickRow>
    </Panel>
    <Panel>
      <PanelHead>横截面<Chevron up /></PanelHead>
      <SizeField id="outer" label="外径" value="5" />
      <SizeField id="inner" label="内径" value="0" />
    </Panel>
    <ResultRow>
      显示结果
      <SquareButton type="button" $s={24} aria-label="显示结果"><SearchIcon /></SquareButton>
    </ResultRow>
    <MoreBar type="button" aria-label="更多选项"><Caret w={11} /></MoreBar>
    <Actions>
      <ActionButton type="button">确定</ActionButton>
      <ActionButton type="button" $primary>应用</ActionButton>
      <ActionButton type="button">取消</ActionButton>
    </Actions>
  </ToolDialog>
);

const ErrorAlert = () => (
  <Alert role="alertdialog">
    <AlertHead>管</AlertHead>
    <AlertBody>
      <Icon w={40}>
        <defs>
          <linearGradient id="err" x2="0" y2="1">
            <stop offset="0" stopColor="#e25a5a" />
            <stop offset=".5" stopColor="#b81414" />
            <stop offset="1" stopColor="#d40808" />
          </linearGradient>
        </defs>
        <circle cx="20" cy="20" r="18.500" fill="#f4f4f4" stroke="#8c8c8c" />
        <circle cx="20" cy="20" r="17" fill="url(#err)" stroke="#8a1a1a" strokeWidth=".5" />
        <path d="M12 12L28 28M28 12L12 28" stroke="#ededed" strokeWidth="6" />
      </Icon>
      线串中有缝隙或有多个环。
    </AlertBody>
    <Actions $center>
      <ActionButton $primary $wide type="button">确定(<u>O</u>)</ActionButton>
    </Actions>
  </Alert>
);

const App = () => (
  <Page>
    <GlobalStyle />
    <QuickBar />
    <Tabs />
    <CurveRibbon />
    <Selection />
    <Main>
      <ResourceStrip />
      <PartNavigator />
      <Workspace>
        <FileTab>
          <PartIcon />
          <span>_model1.prt</span>
          <Icon w={11} color="#fff"><path d="M8 4V1H1.500v9H8V8M4 5.500h3M10.500 3L5.500 8" strokeWidth="1.600" /></Icon>
          <Icon w={9} color="#b9b5b3"><path d="M1 1l7 7M8 1L1 8" strokeWidth="2" /></Icon>
        </FileTab>
        <Viewport>
          <Model />
          <SiteMark />
          <TubeDialog />
          <ErrorAlert />
        </Viewport>
      </Workspace>
    </Main>
  </Page>
);

export default App;
